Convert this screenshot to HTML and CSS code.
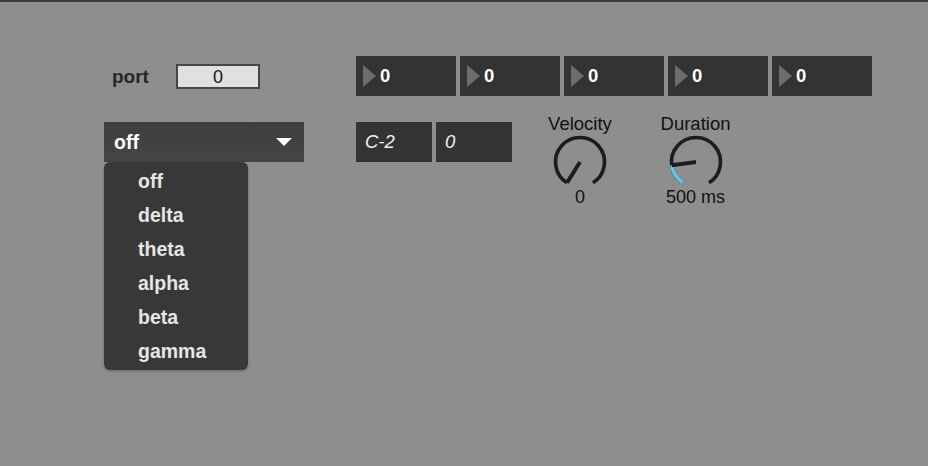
FILE: index.html
```html
<!DOCTYPE html>
<html lang="en">
<head>
    <meta charset="UTF-8">
    <meta name="viewport" content="width=device-width, initial-scale=1.0">
    <title>Band Selector</title>
    <link rel="stylesheet" href="styles.css">
</head>
<body>
    <div class="patcher">
        <div class="left">
            <div class="port-row">
                <span class="port-label">port</span>
                <div class="port-box">0</div>
            </div>
            <div class="dropdown-wrap">
                <div class="dropdown">
                    <span>off</span>
                    <span class="caret"></span>
                </div>
                <ul class="menu">
                    <li>off</li>
                    <li>delta</li>
                    <li>theta</li>
                    <li>alpha</li>
                    <li>beta</li>
                    <li>gamma</li>
                </ul>
            </div>
        </div>
        <div class="right">
            <div class="numbers">
                <div class="numbox"><span class="tri"></span>0</div>
                <div class="numbox"><span class="tri"></span>0</div>
                <div class="numbox"><span class="tri"></span>0</div>
                <div class="numbox"><span class="tri"></span>0</div>
                <div class="numbox"><span class="tri"></span>0</div>
            </div>
            <div class="note-row">
                <div class="note-box">C-2</div>
                <div class="note-box">0</div>
                <div class="dials">
                    <div class="dial">
                        <div class="dial-label">Velocity</div>
                        <svg class="knob" viewBox="0 0 80 53" width="80" height="53">
                            <path d="M27.02 48.78 A24.5 24.5 0 1 1 52.98 48.78" fill="none" stroke="#1d1d1d" stroke-width="3.6"/>
                            <line x1="40" y1="28" x2="27.02" y2="48.78" stroke="#1d1d1d" stroke-width="4"/>
                        </svg>
                        <div class="dial-value">0</div>
                    </div>
                    <div class="dial">
                        <div class="dial-label">Duration</div>
                        <svg class="knob" viewBox="0 0 80 53" width="80" height="53">
                            <path d="M27.02 48.78 A24.5 24.5 0 1 1 52.98 48.78" fill="none" stroke="#1d1d1d" stroke-width="3.6"/>
                            <path d="M27.02 48.78 A24.5 24.5 0 0 1 15.72 31.33" fill="none" stroke="#62c8ee" stroke-width="3.6"/>
                            <line x1="40" y1="28" x2="15.72" y2="31.33" stroke="#1d1d1d" stroke-width="4"/>
                        </svg>
                        <div class="dial-value">500 ms</div>
                    </div>
                </div>
            </div>
        </div>
    </div>
</body>
</html>
```

FILE: styles.css
```css
* {
    margin: 0;
    padding: 0;
    box-sizing: border-box;
}
html, body {
    height: 100%;
}
body {
    font-family: 'Liberation Sans', Arial, sans-serif;
    background-color: #8e8e8e;
    border-top: 2px solid #3a3a3a;
    color: #111;
    overflow: hidden;
}
.patcher {
    display: flex;
    gap: 52px;
    padding: 54px 0 0 104px;
}
.left {
    width: 200px;
}
.port-row {
    display: flex;
    align-items: center;
    height: 25px;
    margin-top: 8px;
    padding-left: 8px;
}
.port-label {
    width: 64px;
    font-size: 19px;
    line-height: 20px;
    font-weight: bold;
    color: #262626;
}
.port-box {
    width: 84px;
    height: 25px;
    display: flex;
    align-items: center;
    justify-content: center;
    background-color: #e0e0e0;
    border: 2px solid #474747;
    font-size: 18px;
    line-height: 20px;
    color: #111;
}
.dropdown-wrap {
    position: relative;
    margin-top: 33px;
}
.dropdown {
    height: 40px;
    display: flex;
    align-items: center;
    justify-content: space-between;
    padding: 0 12px 0 10px;
    background: linear-gradient(#3e3e3e, #454545);
    color: #fff;
    font-size: 19.5px;
    line-height: 20px;
    font-weight: bold;
}
.caret {
    width: 0;
    height: 0;
    border-left: 8px solid transparent;
    border-right: 8px solid transparent;
    border-top: 8px solid #fff;
}
.menu {
    position: absolute;
    top: 40px;
    left: 0;
    width: 144px;
    height: 208px;
    padding: 2px 0;
    list-style: none;
    background-color: #383838;
    border-radius: 6px;
    box-shadow: 0 1px 3px rgba(0, 0, 0, 0.25);
}
.menu li {
    height: 34px;
    line-height: 34px;
    padding-left: 34px;
    font-size: 19.5px;
    font-weight: bold;
    color: #e6e6e6;
}
.numbers {
    display: flex;
    gap: 4px;
}
.numbox {
    width: 100px;
    height: 40px;
    display: flex;
    align-items: center;
    padding-left: 7px;
    background-color: #333;
    color: #fff;
    font-size: 18.5px;
    line-height: 20px;
    font-weight: bold;
}
.tri {
    width: 0;
    height: 0;
    margin-right: 4px;
    border-top: 11.5px solid transparent;
    border-bottom: 11.5px solid transparent;
    border-left: 13px solid #6c6c6c;
}
.note-row {
    display: flex;
    align-items: flex-start;
    gap: 4px;
    margin-top: 26px;
}
.note-box {
    width: 76px;
    height: 40px;
    display: flex;
    align-items: center;
    padding-left: 9px;
    background-color: #333;
    color: #f0f0f0;
    font-size: 18.5px;
    line-height: 20px;
    font-style: italic;
}
.dials {
    display: flex;
    gap: 35.5px;
    margin-left: 24px;
    margin-top: -8px;
}
.dial {
    width: 80px;
    display: flex;
    flex-direction: column;
    align-items: center;
    font-size: 18.5px;
    line-height: 20px;
    color: #111;
}
.knob {
    display: block;
}
.dial-value {
    font-size: 18px;
}
```
